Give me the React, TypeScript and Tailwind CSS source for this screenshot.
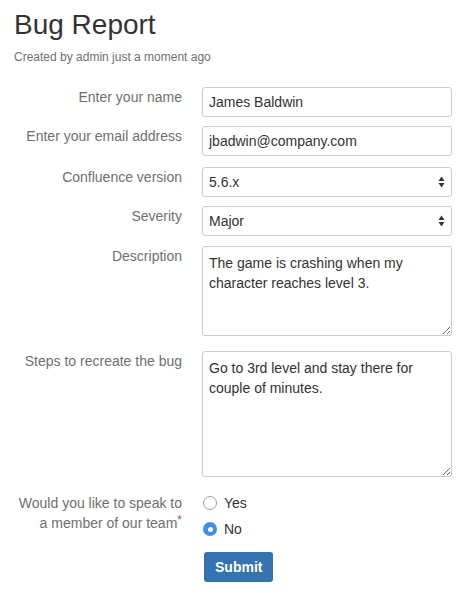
import React from "react";

const font = { fontFamily: '"Liberation Sans", Arial, sans-serif' };

function Label({ children }: { children: React.ReactNode }) {
  return <div className="text-right text-[14px] leading-5 text-[#707070]">{children}</div>;
}

function TextField({ value }: { value: string }) {
  return (
    <div className="h-[30px] rounded-[3px] border border-[#cccccc] bg-white px-[6px] text-[14px] leading-[28px] text-[#333333]">
      {value}
    </div>
  );
}

function SelectField({ value }: { value: string }) {
  return (
    <div className="flex h-[30px] items-center justify-between rounded-[3px] border border-[#cccccc] bg-white pl-[6px] pr-[6px] text-[14px] text-[#333333]">
      <span>{value}</span>
      <svg width="7" height="12" viewBox="0 0 7 12">
        <path d="M3.5 0.5 L6.5 5 L0.5 5 Z" fill="#333" />
        <path d="M3.5 11.5 L6.5 7 L0.5 7 Z" fill="#333" />
      </svg>
    </div>
  );
}

function Area({ value, height }: { value: string; height: string }) {
  return (
    <textarea
      readOnly
      defaultValue={value}
      className={`${height} block w-full rounded-[3px] border border-[#cccccc] bg-white px-[6px] pt-[6px] text-[14px] leading-5 text-[#333333] outline-none`}
      style={font}
    />
  );
}

function Radio({ checked, label }: { checked?: boolean; label: string }) {
  return (
    <div className="flex h-[26px] items-center gap-[7px] pl-[1px] text-[14px] text-[#333333]">
      {checked ? (
        <span className="flex h-[14px] w-[14px] items-center justify-center rounded-full bg-[#3d90e3]">
          <span className="h-[5px] w-[5px] rounded-full bg-white" />
        </span>
      ) : (
        <span className="h-[14px] w-[14px] rounded-full border border-[#a0a0a0] bg-white" />
      )}
      <span>{label}</span>
    </div>
  );
}

export default function App() {
  return (
    <div className="min-h-[599px] w-[476px] bg-white px-[14px] pt-2" style={font}>
      <h1 className="text-[28px] leading-[34px] text-[#333333]">Bug Report</h1>
      <p className="mt-[7px] text-[12px] leading-4 text-[#707070]">Created by admin just a moment ago</p>

      <div className="mt-[22px] grid grid-cols-[168px_250px] items-start gap-x-5">
        <Label>Enter your name</Label>
        <TextField value="James Baldwin" />

        <div className="col-span-2 h-[9px]" />
        <Label>Enter your email address</Label>
        <TextField value="jbadwin@company.com" />

        <div className="col-span-2 h-[11px]" />
        <Label>Confluence version</Label>
        <SelectField value="5.6.x" />

        <div className="col-span-2 h-[9px]" />
        <Label>Severity</Label>
        <SelectField value="Major" />

        <div className="col-span-2 h-[10px]" />
        <Label>Description</Label>
        <Area value="The game is crashing when my character reaches level 3." height="h-[90px]" />

        <div className="col-span-2 h-[15px]" />
        <Label>Steps to recreate the bug</Label>
        <Area value="Go to 3rd level and stay there for couple of minutes." height="h-[126px]" />

        <div className="col-span-2 h-[16px]" />
        <Label>
          Would you like to speak to
          <br />
          a member of our team<span className="align-top text-[12px] leading-[14px] text-[#d04437]">*</span>
        </Label>
        <div className="-mt-[3px] flex flex-col">
          <Radio label="Yes" />
          <Radio checked label="No" />
        </div>

        <div className="col-span-2 h-[10px]" />
        <div />
        <div className="pl-[2px]">
          <button className="h-[30px] rounded-[3px] bg-[#3572b0] px-[11px] text-[14px] font-bold text-white" style={font}>
            Submit
          </button>
        </div>
      </div>
    </div>
  );
}
